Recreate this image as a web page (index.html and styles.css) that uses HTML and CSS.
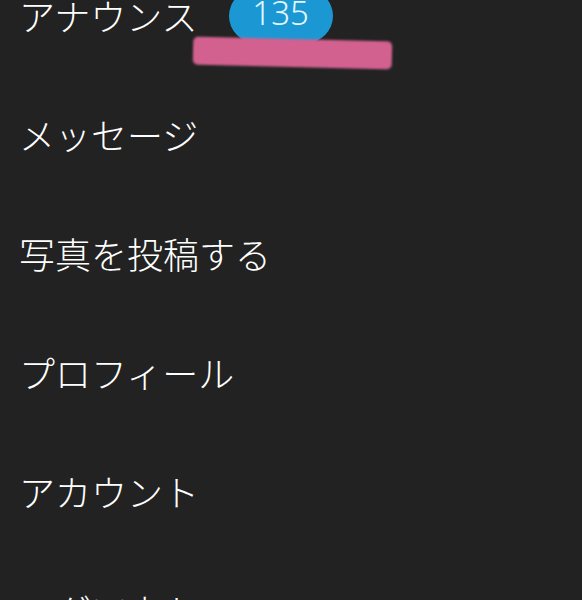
FILE: index.html
```html
<!DOCTYPE html>
<html lang="ja">
<head>
<meta charset="utf-8">
<link rel="stylesheet" href="styles.css">
</head>
<body>
<ul class="menu">
  <li class="item">
    <span class="label">アナウンス</span>
    <span class="badge">135</span>
    <span class="marker"></span>
  </li>
  <li class="item"><span class="label">メッセージ</span></li>
  <li class="item"><span class="label">写真を投稿する</span></li>
  <li class="item"><span class="label">プロフィール</span></li>
  <li class="item"><span class="label">アカウント</span></li>
  <li class="item"><span class="label">ログアウト</span></li>
</ul>
</body>
</html>
```

FILE: styles.css
```css
html, body {
  margin: 0;
  padding: 0;
  background: #222222;
  overflow: hidden;
}
body {
  width: 582px;
  height: 600px;
  font-family: "Noto Sans CJK JP", "Noto Sans", sans-serif;
  color: #ffffff;
}
.menu {
  list-style: none;
  margin: -45px 0 0 0;
  padding: 0 0 0 19px;
}
.item {
  position: relative;
  display: flex;
  align-items: center;
  height: 119px;
  font-size: 36px;
  font-weight: 300;
  line-height: 1;
}
.badge {
  display: inline-flex;
  align-items: center;
  justify-content: center;
  margin-left: 31px;
  margin-top: 2px;
  width: 104px;
  height: 54px;
  border-radius: 27px;
  background: #1b98d3;
  color: #e4f6ff;
  font-family: "Noto Sans", "Open Sans", sans-serif;
  font-size: 33px;
  font-weight: 300;
  padding-bottom: 6px;
  box-sizing: border-box;
}
.marker {
  position: absolute;
  left: 174px;
  top: 84px;
  width: 199px;
  height: 28px;
  background: #d2618f;
  border-radius: 5px;
  transform: rotate(1.4deg);
  filter: blur(1px);
}
```
